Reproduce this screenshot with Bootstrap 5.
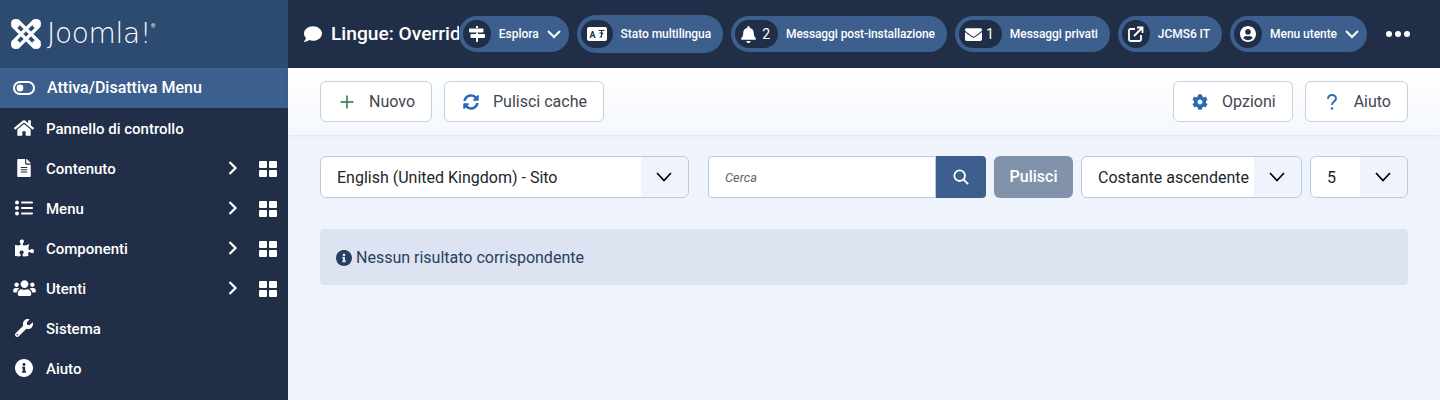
<!DOCTYPE html>
<html lang="en">
<head>
  <meta charset="UTF-8">
  <title>Lingue: Override</title>
  <link href="https://cdn.jsdelivr.net/npm/bootstrap@5.3.0/dist/css/bootstrap.min.css" rel="stylesheet">
  <style>
    body { font-family: Roboto, "Liberation Sans", sans-serif; background-color: #eff4fc; height: 400px; overflow: hidden; }
    svg { fill: currentColor; display: block; }
    .side-col { width: 288px; flex-shrink: 0; background-color: #202f47; color: #fff; height: 400px; }
    .brand-box { height: 68px; background-color: #2d4a70; padding-left: 11px; }
    .brand-name { font-family: "DejaVu Sans", sans-serif; font-weight: 200; font-size: 28px; letter-spacing: -.3px; line-height: 1; margin-left: 6px; }
    .brand-reg { font-size: 6px; align-self: flex-start; margin-top: 23px; line-height: 1; }
    .side-link { height: 40px; color: #fff; text-decoration: none; font-size: 15px; font-weight: 500; padding: 2px 11px 0 0; }
    .side-link.is-toggle { background-color: #3c5f8e; font-size: 16px; padding-top: 0; }
    .side-icon { width: 24px; margin: -2px 10px 0 12px; flex-shrink: 0; }
    .is-toggle .side-icon { margin: 0 11px 0 12px; }
    .side-chev { width: 10px; height: 14px; margin: -2px 21px 0 0; fill: none; stroke: currentColor; stroke-width: 2.2; }
    .side-grid { width: 18px; height: 16px; display: grid; grid-template-columns: 1fr 1fr; gap: 2px; }
    .side-grid i { background-color: #fff; border-radius: 1px; }
    .top-bar { height: 68px; background-color: #202f47; color: #fff; }
    .page-title { flex: 1 1 0; min-width: 0; overflow: hidden; white-space: nowrap; font-size: 19.2px; font-weight: 500; padding-left: 15px; }
    .top-pill { height: 36px; background-color: #3c5f8e; border-radius: 18px; padding: 0 12px 0 4px; font-size: 12px; font-weight: 500; letter-spacing: -.05px; color: #fff; text-decoration: none; flex-shrink: 0; }
    .top-pill.is-big { height: 38px; border-radius: 19px; }
    .top-pill.is-tight { letter-spacing: -.09px; }
    .top-pill.has-chev { padding-right: 8px; }
    .pill-icon { height: 28px; min-width: 28px; border-radius: 14px; background-color: #202f47; font-size: 14px; font-weight: 400; padding: 0 6px; }
    .pill-icon.is-wide { width: 43px; padding: 0 8px 0 6px; }
    .pill-chev { width: 14px; height: 10px; fill: none; stroke: currentColor; stroke-width: 2; margin-left: 8px; }
    .more-dots { width: 24px; margin: 0 30px 0 19px; }
    .more-dots i { width: 6px; height: 6px; border-radius: 50%; background-color: #fff; }
    .tool-bar { height: 67px; gap: 12px; background: linear-gradient(#fff, #f4f7fc); box-shadow: 0 1px 3px rgba(40, 60, 100, .08); padding: 13px 32px 0; }
    .tool-btn { height: 41px; background-color: #fff; border: 1px solid #c5d0e0; color: #3f4650; font-size: 16px; padding: 0 16px 0 18px; }
    .tool-btn:hover { background-color: #fff; color: #3f4650; border-color: #c5d0e0; }
    .tool-ico { width: 16px; height: 16px; margin-right: 14px; }
    .filter-row { padding: 21px 32px 0; }
    .pick-box { height: 42px; border-color: #b8cbe3; font-size: 16px; color: #22262a; padding: 1px 0 0 16px; background-repeat: no-repeat, no-repeat; background-image: url("data:image/svg+xml,%3csvg xmlns='http://www.w3.org/2000/svg' viewBox='0 0 16 10'%3e%3cpath fill='none' stroke='%23000' stroke-width='1.7' d='M1 1l7 7.500 7-7.500'/%3e%3c/svg%3e"), linear-gradient(#eff4fc, #eff4fc); background-position: right 16px center, right top; background-size: 16px 10px, 47px 100%; }
    .pick-lang { width: 369px; margin-right: 19px; }
    .pick-sort { width: 221px; margin: 0 8px; }
    .pick-num { width: 98px; }
    .find-box { width: 228px; height: 42px; border-color: #b8cbe3; font-size: 12.8px; font-style: italic; padding-left: 16px; border-radius: 4px 0 0 4px; }
    .find-box::placeholder { color: #666; }
    .find-btn { width: 50px; height: 42px; background-color: #3c5f8e; color: #fff; border-radius: 0 4px 4px 0; border: 0; }
    .clear-btn { height: 42px; width: 79px; margin-left: 8px; background-color: #8093ab; color: #fff; font-size: 16px; font-weight: 500; border: 0; padding: 0; }
    .empty-note { margin: 31px 32px 0; height: 56px; background-color: #dde3f0; color: #27405f; font-size: 16px; padding: 1px 16px 0; border-radius: 4px; border: 0; }
  </style>
</head>
<body>
<div class="d-flex">
  <div class="side-col">
    <div class="brand-box d-flex align-items-center">
      <svg width="30" height="30" viewBox="0 0 30 30">
        <g fill="none" stroke="#fff" stroke-width="3.2" stroke-linecap="round">
          <path d="M2 7l21 21M7 2l21 21M28 7L7 28M23 2L2 23"/>
        </g>
        <circle cx="4.500" cy="4.500" r="4.500"/><circle cx="25.500" cy="4.500" r="4.500"/>
        <circle cx="4.500" cy="25.500" r="4.500"/><circle cx="25.500" cy="25.500" r="4.500"/>
      </svg>
      <span class="brand-name">Joomla!</span><span class="brand-reg">®</span>
    </div>
    <a class="side-link is-toggle d-flex align-items-center" href="#">
      <span class="side-icon d-flex justify-content-center"><svg width="22" height="14" viewBox="0 0 22 14"><rect x="1" y="1" width="20" height="12" rx="6" fill="none" stroke="#fff" stroke-width="2"/><circle cx="7" cy="7" r="3.4"/></svg></span>Attiva/Disattiva Menu
    </a>
    <a class="side-link d-flex align-items-center" href="#">
      <span class="side-icon d-flex justify-content-center"><svg width="20" height="18" viewBox="0 0 576 512"><path d="M280.37 148.26L96 300.11V464a16 16 0 0 0 16 16l112.06-.29a16 16 0 0 0 15.92-16V368a16 16 0 0 1 16-16h64a16 16 0 0 1 16 16v95.64a16 16 0 0 0 16 16.05L464 480a16 16 0 0 0 16-16V300L295.67 148.26a12.19 12.19 0 0 0-15.3 0zM571.6 251.47L488 182.56V44.05a12 12 0 0 0-12-12h-56a12 12 0 0 0-12 12v72.61L318.47 43a48 48 0 0 0-61 0L4.34 251.47a12 12 0 0 0-1.6 16.9l25.5 31A12 12 0 0 0 45.15 301l235.22-193.74a12.19 12.19 0 0 1 15.3 0L530.9 301a12 12 0 0 0 16.9-1.6l25.5-31a12 12 0 0 0-1.7-16.93z"/></svg></span>Pannello di controllo
    </a>
    <a class="side-link d-flex align-items-center" href="#">
      <span class="side-icon d-flex justify-content-center"><svg width="14" height="18" viewBox="0 0 384 512"><path d="M224 136V0H24C10.7 0 0 10.7 0 24v464c0 13.3 10.7 24 24 24h336c13.3 0 24-10.7 24-24V160H248c-13.2 0-24-10.8-24-24zm64 236c0 6.6-5.4 12-12 12H108c-6.6 0-12-5.4-12-12v-8c0-6.6 5.4-12 12-12h168c6.6 0 12 5.4 12 12v8zm0-64c0 6.6-5.4 12-12 12H108c-6.6 0-12-5.4-12-12v-8c0-6.6 5.4-12 12-12h168c6.6 0 12 5.4 12 12v8zm0-72v8c0 6.6-5.4 12-12 12H108c-6.6 0-12-5.4-12-12v-8c0-6.6 5.4-12 12-12h168c6.6 0 12 5.4 12 12zm96-114.1v6.1H256V0h6.1c6.4 0 12.5 2.5 17 7l97.9 98c4.5 4.5 7 10.6 7 16.9z"/></svg></span>Contenuto
      <svg class="side-chev ms-auto" viewBox="0 0 10 14"><path d="M1.500 1l6 6-6 6"/></svg>
      <span class="side-grid"><i></i><i></i><i></i><i></i></span>
    </a>
    <a class="side-link d-flex align-items-center" href="#">
      <span class="side-icon d-flex justify-content-center"><svg width="18" height="16" viewBox="0 0 18 16"><circle cx="2" cy="2.500" r="2"/><circle cx="2" cy="8" r="2"/><circle cx="2" cy="13.500" r="2"/><rect x="6" y="1.500" width="12" height="2" rx="1"/><rect x="6" y="7" width="12" height="2" rx="1"/><rect x="6" y="12.500" width="12" height="2" rx="1"/></svg></span>Menu
      <svg class="side-chev ms-auto" viewBox="0 0 10 14"><path d="M1.500 1l6 6-6 6"/></svg>
      <span class="side-grid"><i></i><i></i><i></i><i></i></span>
    </a>
    <a class="side-link d-flex align-items-center" href="#">
      <span class="side-icon d-flex justify-content-center"><svg width="19" height="18" viewBox="0 0 576 512"><path d="M519.442 288.651c-41.519 0-59.5 31.593-82.058 31.593C377.409 320.244 432 144 432 144s-196.288 80-196.288-3.297c0-35.827 36.288-46.25 36.288-85.985C272 19.216 243.885 0 210.539 0c-34.654 0-66.366 18.891-66.366 56.346 0 41.364 31.711 59.277 31.711 81.75C175.885 207.719 0 166.758 0 166.758v333.237s178.635 41.047 178.635-28.662c0-22.473-40-40.107-40-81.471 0-37.456 29.25-56.346 63.577-56.346 33.673 0 61.788 19.216 61.788 54.717 0 39.735-36.288 50.158-36.288 85.985 0 60.803 129.675 25.73 181.23 25.73 0 0-34.725-120.101 25.827-120.101 35.962 0 46.423 36.152 86.308 36.152C556.712 416 576 387.99 576 354.443c0-34.199-18.962-65.792-56.558-65.792z"/></svg></span>Componenti
      <svg class="side-chev ms-auto" viewBox="0 0 10 14"><path d="M1.500 1l6 6-6 6"/></svg>
      <span class="side-grid"><i></i><i></i><i></i><i></i></span>
    </a>
    <a class="side-link d-flex align-items-center" href="#">
      <span class="side-icon d-flex justify-content-center"><svg width="23" height="18" viewBox="0 0 640 512"><path d="M96 224c35.3 0 64-28.7 64-64s-28.7-64-64-64-64 28.7-64 64 28.7 64 64 64zm448 0c35.3 0 64-28.7 64-64s-28.7-64-64-64-64 28.7-64 64 28.7 64 64 64zm32 32h-64c-17.6 0-33.5 7.1-45.1 18.6 40.3 22.1 68.9 62 75.1 109.4h66c17.7 0 32-14.3 32-32v-32c0-35.3-28.7-64-64-64zm-256 0c61.9 0 112-50.1 112-112S381.9 32 320 32 208 82.1 208 144s50.1 112 112 112zm76.8 32h-8.3c-20.8 10-43.9 16-68.5 16s-47.6-6-68.5-16h-8.3C179.6 288 128 339.6 128 403.2V432c0 26.5 21.5 48 48 48h288c26.5 0 48-21.5 48-48v-28.8c0-63.6-51.6-115.2-115.2-115.2zm-223.7-13.4C161.5 263.1 145.6 256 128 256H64c-35.3 0-64 28.7-64 64v32c0 17.7 14.3 32 32 32h65.9c6.3-47.4 34.9-87.3 75.2-109.4z"/></svg></span>Utenti
      <svg class="side-chev ms-auto" viewBox="0 0 10 14"><path d="M1.500 1l6 6-6 6"/></svg>
      <span class="side-grid"><i></i><i></i><i></i><i></i></span>
    </a>
    <a class="side-link d-flex align-items-center" href="#">
      <span class="side-icon d-flex justify-content-center"><svg width="18" height="18" viewBox="0 0 512 512"><path d="M507.73 109.1c-2.24-9.03-13.54-12.09-20.12-5.51l-74.36 74.36-67.88-11.31-11.31-67.88 74.36-74.36c6.62-6.62 3.43-17.9-5.66-20.16-47.38-11.74-99.55.91-136.58 37.93-39.64 39.64-50.55 97.1-34.05 147.2L18.74 402.76c-24.99 24.99-24.99 65.51 0 90.5 24.99 24.99 65.51 24.99 90.5 0l213.21-213.21c50.12 16.71 107.47 5.68 147.37-34.22 37.07-37.07 49.7-89.32 37.91-136.73zM64 472c-13.25 0-24-10.75-24-24 0-13.26 10.75-24 24-24s24 10.74 24 24c0 13.25-10.75 24-24 24z"/></svg></span>Sistema
    </a>
    <a class="side-link d-flex align-items-center" href="#">
      <span class="side-icon d-flex justify-content-center"><svg width="18" height="18" viewBox="8 8 496 496"><path d="M256 8C119.043 8 8 119.083 8 256c0 136.997 111.043 248 248 248s248-111.003 248-248C504 119.083 392.957 8 256 8zm0 110c23.196 0 42 18.804 42 42s-18.804 42-42 42-42-18.804-42-42 18.804-42 42-42zm56 254c0 6.627-5.373 12-12 12h-88c-6.627 0-12-5.373-12-12v-24c0-6.627 5.373-12 12-12h12v-64h-12c-6.627 0-12-5.373-12-12v-24c0-6.627 5.373-12 12-12h64c6.627 0 12 5.373 12 12v100h12c6.627 0 12 5.373 12 12v24z"/></svg></span>Aiuto
    </a>
  </div>

  <div class="flex-grow-1">
    <div class="top-bar d-flex align-items-center">
      <div class="page-title d-flex align-items-center gap-2">
        <svg width="20" height="18" viewBox="0 0 512 512" class="flex-shrink-0"><path d="M256 32C114.6 32 0 125.1 0 240c0 49.6 21.4 95 57 130.7C44.5 421.1 2.7 466 2.2 466.5c-2.2 2.3-2.8 5.7-1.5 8.7S4.8 480 8 480c66.3 0 116-31.8 140.6-51.4 32.7 12.3 69 19.4 107.4 19.4 141.4 0 256-93.1 256-208S397.4 32 256 32z"/></svg>
        <span>Lingue: Override</span>
      </div>
      <div class="d-flex align-items-center gap-2">
        <a class="top-pill has-chev d-flex align-items-center" href="#">
          <span class="pill-icon d-flex align-items-center justify-content-center me-2"><svg width="16" height="16" viewBox="0 0 16 16"><rect x="0" y="2.500" width="14.500" height="4" rx="1"/><rect x="1.500" y="8" width="14.500" height="4" rx="1"/><rect x="7" y="0" width="2" height="2"/><rect x="7" y="6.500" width="2" height="1.500"/><rect x="7" y="12" width="2" height="4"/></svg></span>Esplora
          <svg class="pill-chev" viewBox="0 0 14 10"><path d="M1 2l6 6 6-6"/></svg>
        </a>
        <a class="top-pill is-big d-flex align-items-center" href="#">
          <span class="pill-icon d-flex align-items-center justify-content-center me-2"><svg width="20" height="14" viewBox="0 0 20 14"><rect width="20" height="14" rx="2"/><text x="2.500" y="10.500" font-size="9" font-weight="700" fill="#202f47" font-family="Roboto, sans-serif">A</text><path d="M11.500 3.500h6M14.500 3.500v7M12.500 6h3.500l-3 4.500" fill="none" stroke="#202f47" stroke-width="1"/></svg></span>Stato multilingua
        </a>
        <a class="top-pill is-tight d-flex align-items-center" href="#">
          <span class="pill-icon is-wide d-flex align-items-center justify-content-between me-2"><svg width="15" height="17" viewBox="0 0 448 512"><path d="M224 512c35.32 0 63.97-28.65 63.97-64H160.03c0 35.35 28.65 64 63.97 64zm215.39-149.71c-19.32-20.76-55.47-51.99-55.47-154.29 0-77.7-54.48-139.9-127.94-155.16V32c0-17.67-14.32-32-31.98-32s-31.98 14.33-31.98 32v20.84C118.56 68.1 64.08 130.3 64.08 208c0 102.3-36.15 133.53-55.47 154.29-6 6.45-8.66 14.16-8.61 21.71.11 16.4 12.98 32 32.1 32h383.8c19.12 0 32-15.6 32.1-32 .05-7.55-2.61-15.27-8.61-21.71z"/></svg>2</span>Messaggi post-installazione
        </a>
        <a class="top-pill d-flex align-items-center" href="#">
          <span class="pill-icon is-wide d-flex align-items-center justify-content-between me-2"><svg width="17" height="17" viewBox="0 0 512 512"><path d="M502.3 190.8c3.9-3.1 9.7-.2 9.7 4.7V400c0 26.5-21.5 48-48 48H48c-26.500 0-48-21.500-48-48V195.600c0-5 5.700-7.800 9.700-4.700 22.400 17.400 52.100 39.500 154.100 113.600 21.100 15.400 56.700 47.800 92.200 47.600 35.700.3 72-32.800 92.300-47.600 102-74.100 131.600-96.300 154-113.700zM256 320c23.200.4 56.600-29.200 73.400-41.400 132.700-96.300 142.800-104.700 173.400-128.700 5.800-4.500 9.200-11.500 9.200-18.900v-19c0-26.500-21.500-48-48-48H48C21.500 64 0 85.500 0 112v19c0 7.400 3.400 14.300 9.200 18.900 30.600 23.900 40.700 32.400 173.400 128.700 16.800 12.200 50.200 41.800 73.400 41.400z"/></svg>1</span>Messaggi privati
        </a>
        <a class="top-pill d-flex align-items-center" href="#">
          <span class="pill-icon d-flex align-items-center justify-content-center me-2"><svg width="16" height="16" viewBox="0 0 16 16" style="fill:none;stroke:#fff;stroke-width:1.800"><path d="M7 3H2.500A1.500 1.500 0 0 0 1 4.500v9A1.500 1.500 0 0 0 2.500 15h9a1.500 1.500 0 0 0 1.500-1.500V9"/><path d="M6 10l8-8M9 1.500h5.500V7"/></svg></span>JCMS6 IT
        </a>
        <a class="top-pill has-chev d-flex align-items-center" href="#">
          <span class="pill-icon d-flex align-items-center justify-content-center me-2"><svg width="16" height="16" viewBox="0 8 496 496"><path d="M248 8C111 8 0 119 0 256s111 248 248 248 248-111 248-248S385 8 248 8zm0 96c48.600 0 88 39.400 88 88s-39.400 88-88 88-88-39.400-88-88 39.400-88 88-88zm0 344c-58.700 0-111.300-26.600-146.500-68.200 18.800-35.400 55.600-59.800 98.500-59.800 2.400 0 4.800.4 7.100 1.100 13 4.200 26.600 6.900 40.900 6.900 14.300 0 28-2.700 40.900-6.900 2.300-.7 4.700-1.100 7.100-1.100 42.900 0 79.700 24.400 98.500 59.800C359.300 421.400 306.700 448 248 448z"/></svg></span>Menu utente
          <svg class="pill-chev" viewBox="0 0 14 10"><path d="M1 2l6 6 6-6"/></svg>
        </a>
      </div>
      <div class="more-dots d-flex justify-content-between flex-shrink-0"><i></i><i></i><i></i></div>
    </div>

    <div class="tool-bar d-flex">
      <button class="btn tool-btn d-flex align-items-center" type="button">
        <svg class="tool-ico" viewBox="0 0 16 16" style="color:#2f7d4b"><rect x="1.500" y="7.200" width="13" height="1.600"/><rect x="7.200" y="1.500" width="1.600" height="13"/></svg>Nuovo
      </button>
      <button class="btn tool-btn d-flex align-items-center" type="button">
        <svg class="tool-ico" viewBox="0 0 512 512" style="color:#2a69b8"><path d="M370.720 133.280C339.458 104.008 298.888 87.962 255.848 88c-77.458.068-144.328 53.178-162.791 126.850-1.344 5.363-6.122 9.150-11.651 9.150H24.103c-7.498 0-13.194-6.807-11.807-14.176C33.933 94.924 134.813 8 256 8c66.448 0 126.791 26.136 171.315 68.685L463.030 40.970C478.149 25.851 504 36.559 504 57.941V192c0 13.255-10.745 24-24 24H345.941c-21.382 0-32.090-25.851-16.971-40.971l41.750-41.749zM32 296h134.059c21.382 0 32.090 25.851 16.971 40.971l-41.750 41.750c31.262 29.273 71.835 45.319 114.876 45.280 77.418-.07 144.315-53.144 162.787-126.849 1.344-5.363 6.122-9.150 11.651-9.150h57.304c7.498 0 13.194 6.807 11.807 14.176C478.067 417.076 377.187 504 256 504c-66.448 0-126.791-26.136-171.315-68.685L48.970 471.030C33.851 486.149 8 475.441 8 454.059V320c0-13.255 10.745-24 24-24z"/></svg>Pulisci cache
      </button>
      <button class="btn tool-btn d-flex align-items-center ms-auto" type="button">
        <svg class="tool-ico" viewBox="0 0 512 512" style="color:#2a69b8"><path d="M487.400 315.700l-42.600-24.600c4.300-23.200 4.300-47 0-70.200l42.600-24.600c4.900-2.800 7.100-8.600 5.500-14-11.100-35.600-30-67.800-54.700-94.600-3.800-4.100-10-5.100-14.800-2.300L380.800 110c-17.900-15.400-38.500-27.300-60.800-35.100V25.800c0-5.600-3.900-10.500-9.400-11.700-36.700-8.200-74.300-7.800-109.200 0-5.500 1.200-9.400 6.100-9.400 11.700V75c-22.200 7.900-42.800 19.800-60.800 35.100L88.700 85.500c-4.900-2.800-11-1.900-14.800 2.300-24.700 26.700-43.600 58.900-54.700 94.600-1.700 5.400.6 11.200 5.500 14L67.300 221c-4.300 23.200-4.300 47 0 70.200l-42.600 24.600c-4.900 2.800-7.100 8.600-5.500 14 11.100 35.600 30 67.800 54.700 94.600 3.800 4.100 10 5.100 14.800 2.300l42.600-24.600c17.900 15.400 38.500 27.300 60.800 35.100v49.200c0 5.600 3.900 10.500 9.400 11.700 36.700 8.200 74.300 7.800 109.200 0 5.500-1.200 9.400-6.100 9.400-11.700v-49.200c22.200-7.900 42.800-19.800 60.800-35.100l42.600 24.600c4.900 2.800 11 1.900 14.800-2.300 24.700-26.700 43.600-58.900 54.700-94.600 1.500-5.500-.7-11.300-5.600-14.100zM256 336c-44.100 0-80-35.900-80-80s35.900-80 80-80 80 35.900 80 80-35.900 80-80 80z"/></svg>Opzioni
      </button>
      <button class="btn tool-btn d-flex align-items-center" type="button">
        <svg class="tool-ico" viewBox="0 0 16 16" style="fill:none;stroke:#2a69b8;stroke-width:1.900"><path d="M4 5c0-2.500 1.800-4 4-4s4 1.500 4 3.600c0 3-4 3-4 6.400"/><circle cx="8" cy="14.500" r="1.200" style="fill:#2a69b8;stroke:none"/></svg>Aiuto
      </button>
    </div>

    <div class="filter-row d-flex">
      <select class="form-select pick-box pick-lang"><option>English (United Kingdom) - Sito</option></select>
      <div class="d-flex">
        <input class="form-control find-box" type="text" placeholder="Cerca">
        <button class="find-btn d-flex align-items-center justify-content-center" type="button"><svg width="16" height="16" viewBox="0 0 18 18" style="fill:none;stroke:#fff;stroke-width:2"><circle cx="7.500" cy="7.500" r="6"/><path d="M12 12l5 5"/></svg></button>
      </div>
      <button class="btn clear-btn" type="button">Pulisci</button>
      <select class="form-select pick-box pick-sort"><option>Costante ascendente</option></select>
      <select class="form-select pick-box pick-num"><option>5</option></select>
    </div>

    <div class="alert empty-note d-flex align-items-center">
      <svg width="16" height="16" viewBox="8 8 496 496" class="me-1"><path d="M256 8C119.043 8 8 119.083 8 256c0 136.997 111.043 248 248 248s248-111.003 248-248C504 119.083 392.957 8 256 8zm0 110c23.196 0 42 18.804 42 42s-18.804 42-42 42-42-18.804-42-42 18.804-42 42-42zm56 254c0 6.627-5.373 12-12 12h-88c-6.627 0-12-5.373-12-12v-24c0-6.627 5.373-12 12-12h12v-64h-12c-6.627 0-12-5.373-12-12v-24c0-6.627 5.373-12 12-12h64c6.627 0 12 5.373 12 12v100h12c6.627 0 12 5.373 12 12v24z"/></svg>Nessun risultato corrispondente
    </div>
  </div>
</div>
<script src="https://cdn.jsdelivr.net/npm/bootstrap@5.3.0/dist/js/bootstrap.bundle.min.js"></script>
</body>
</html>
